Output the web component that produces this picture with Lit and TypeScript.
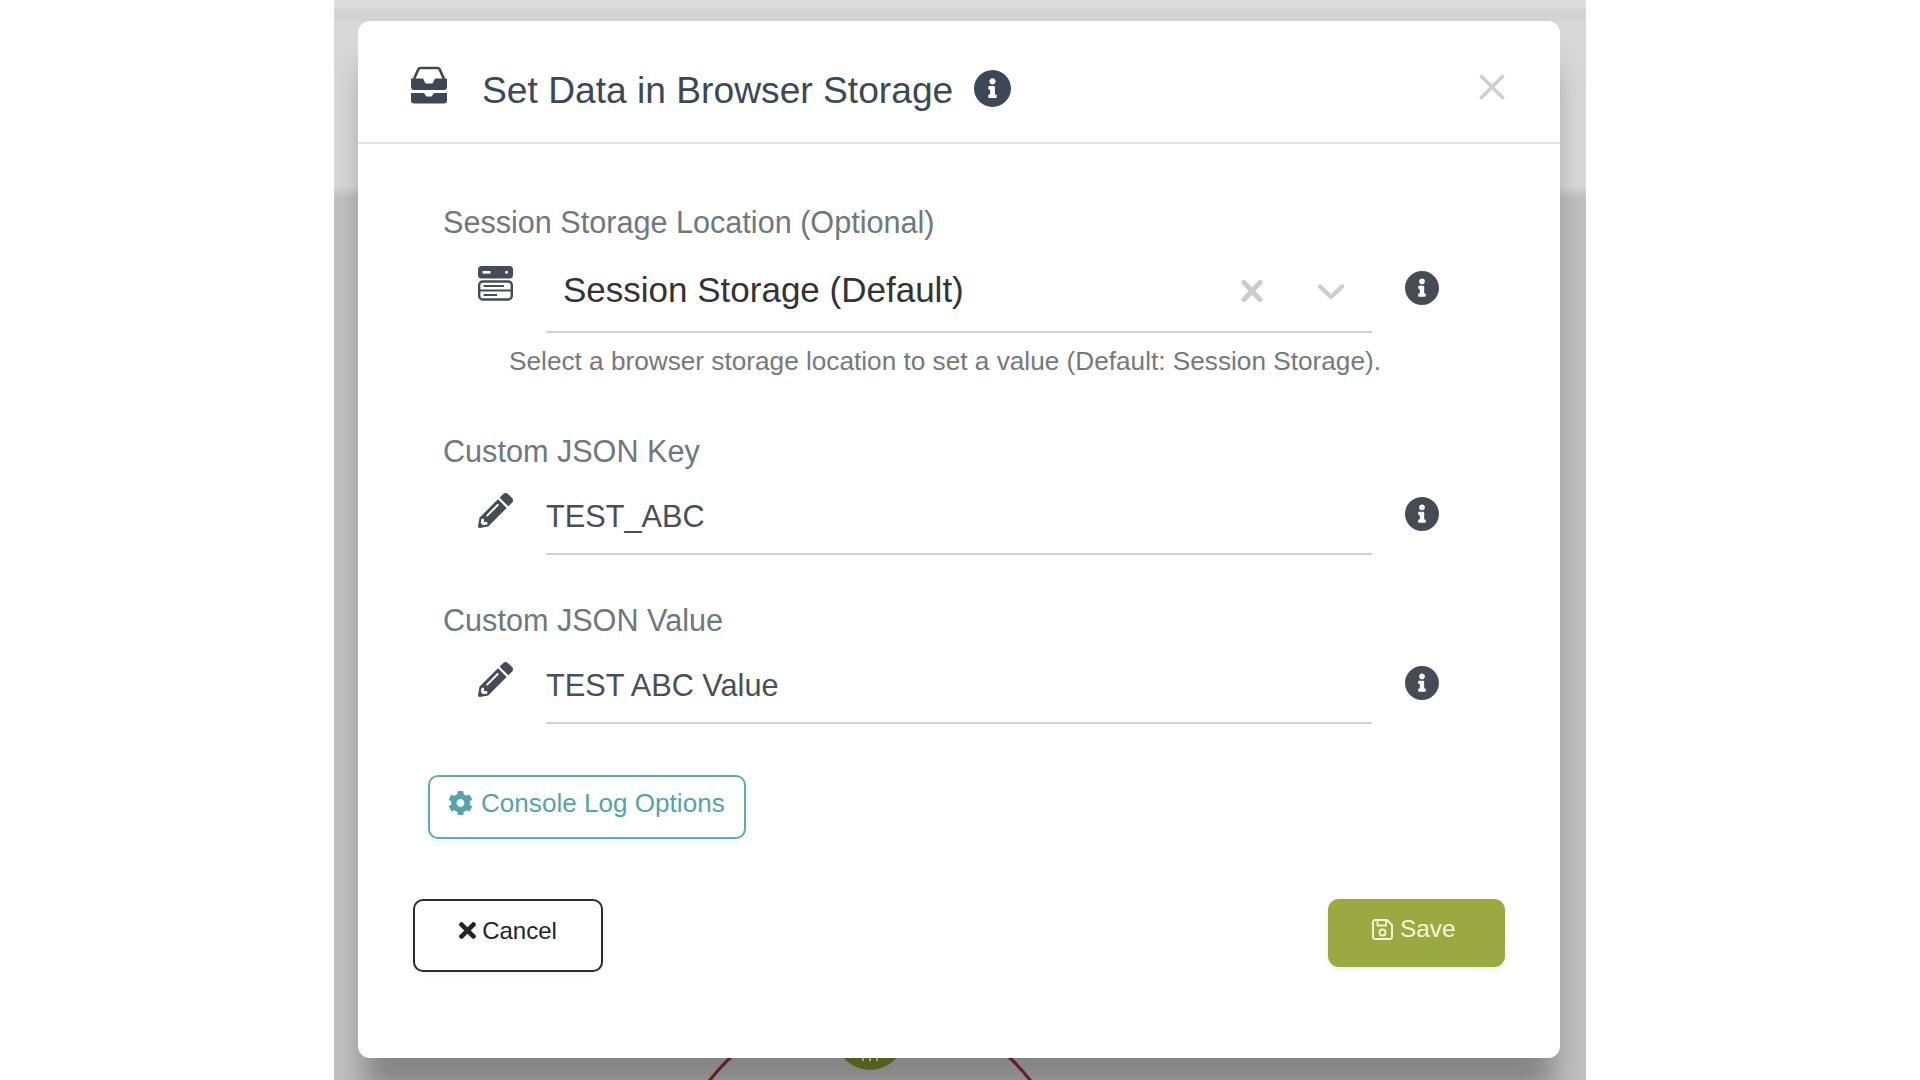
import { LitElement, html, css, svg } from "lit";
import { customElement } from "lit/decorators.js";

const INFO = "M256 8C119.043 8 8 119.083 8 256c0 136.997 111.043 248 248 248s248-111.003 248-248C504 119.083 392.957 8 256 8zm0 110c23.196 0 42 18.804 42 42s-18.804 42-42 42-42-18.804-42-42 18.804-42 42-42zm56 254c0 6.627-5.373 12-12 12h-88c-6.627 0-12-5.373-12-12v-24c0-6.627 5.373-12 12-12h12v-64h-12c-6.627 0-12-5.373-12-12v-24c0-6.627 5.373-12 12-12h64c6.627 0 12 5.373 12 12v100h12c6.627 0 12 5.373 12 12v24z";
const PENCIL = "M497.9 142.1l-46.1 46.1c-4.7 4.7-12.3 4.7-17 0l-111-111c-4.7-4.7-4.7-12.3 0-17l46.1-46.1c18.7-18.7 49.1-18.7 67.9 0l60.1 60.1c18.8 18.7 18.8 49.1 0 67.9zM284.2 99.8L21.6 362.4.4 483.9c-2.9 16.4 11.4 30.6 27.8 27.8l121.5-21.3 262.6-262.6c4.7-4.7 4.7-12.3 0-17l-111-111c-4.8-4.7-12.4-4.7-17.1 0zM124.1 339.9c-5.5-5.5-5.5-14.3 0-19.8l154-154c5.5-5.5 14.3-5.5 19.8 0s5.5 14.3 0 19.8l-154 154c-5.5 5.5-14.3 5.5-19.8 0zM88 424h48v36.3l-64.5 11.3-31.1-31.1L51.7 376H88v48z";
const COG = "M487.4 315.7l-42.6-24.6c4.3-23.2 4.3-47 0-70.2l42.6-24.6c4.9-2.8 7.1-8.6 5.5-14-11.1-35.6-30-67.8-54.7-94.6-3.8-4.1-10-5.1-14.8-2.3L380.8 110c-17.9-15.4-38.5-27.3-60.8-35.1V25.8c0-5.6-3.9-10.5-9.4-11.7-36.7-8.2-74.3-7.8-109.2 0-5.5 1.2-9.4 6.1-9.4 11.7V75c-22.2 7.9-42.8 19.8-60.8 35.1L88.7 85.5c-4.9-2.8-11-1.9-14.8 2.3-24.7 26.7-43.6 58.9-54.7 94.6-1.7 5.4.6 11.2 5.5 14L67.3 221c-4.3 23.2-4.3 47 0 70.2l-42.6 24.6c-4.9 2.8-7.1 8.6-5.5 14 11.1 35.6 30 67.8 54.7 94.6 3.8 4.1 10 5.1 14.8 2.3l42.6-24.6c17.9 15.4 38.5 27.3 60.8 35.1v49.2c0 5.6 3.9 10.5 9.4 11.7 36.7 8.2 74.3 7.8 109.2 0 5.5-1.2 9.4-6.1 9.4-11.7v-49.2c22.2-7.9 42.8-19.8 60.8-35.1l42.6 24.6c4.9 2.8 11 1.9 14.8-2.3 24.7-26.7 43.6-58.9 54.7-94.6 1.5-5.5-.7-11.3-5.6-14.1zM256 336c-44.1 0-80-35.9-80-80s35.9-80 80-80 80 35.9 80 80-35.9 80-80 80z";
const TIMES = "M242.72 256l100.07-100.07c12.28-12.28 12.28-32.19 0-44.48l-22.24-22.24c-12.28-12.28-32.19-12.28-44.48 0L176 189.28 75.93 89.21c-12.28-12.28-32.19-12.28-44.48 0L9.21 111.45c-12.28 12.28-12.28 32.19 0 44.48L109.28 256 9.21 356.07c-12.28 12.28-12.28 32.19 0 44.48l22.24 22.24c12.28 12.28 32.2 12.28 44.48 0L176 322.72l100.07 100.07c12.28 12.28 32.2 12.28 44.48 0l22.24-22.24c12.28-12.28 12.28-32.19 0-44.48L242.72 256z";

const infoIcon = (cls: string) => html`<svg class=${cls} viewBox="8 8 496 496"><path fill="currentColor" d=${INFO}></path></svg>`;
const pencilIcon = () => html`<svg class="field-icon pencil" viewBox="0 0 512 512"><path fill="currentColor" d=${PENCIL}></path></svg>`;

@customElement("app-root")
export class AppRoot extends LitElement {
  static styles = css`
    :host { display: block; width: 1920px; height: 1080px; overflow: hidden; background: #fff;
      font-family: "Liberation Sans", Arial, sans-serif; }
    * { box-sizing: border-box; }
    .stage { position: relative; width: 1252px; height: 1080px; margin: 0 auto; overflow: hidden; padding: 21px 26px 0 24px;
      background: linear-gradient(#dcdcdc 0, #dcdcdc 8px, #d6d6d6 8px, #d2d2d2 21px, #d8d8d8 21px, #d8d8d8 186px, #c0c0c0 198px, #c0c0c0 100%); }
    .behind { position: absolute; left: 0; top: 0; width: 1252px; height: 1080px; }
    .modal { position: relative; width: 1202px; height: 1037px; background: #fff; border-radius: 12px;
      box-shadow: 0 40px 30px -6px rgba(0,0,0,.31); }
    .head { display: flex; align-items: flex-start; height: 123px; border-bottom: 2px solid #e2e4e6; color: #3c4858; }
    .inbox { width: 38px; height: 38px; margin: 45px 0 0 52px; flex: none; }
    .title { margin: 0 0 0 34px; padding-top: 47px; font-size: 37.2px; line-height: 44px; font-weight: 400; white-space: nowrap; }
    .title-info { width: 37px; height: 37px; margin: 49px 0 0 21px; flex: none; color: #3c4858; }
    .close { width: 26px; height: 26px; margin: 53px 55px 0 auto; flex: none; color: #cfcfcf; }
    .body { padding: 60px 0 0 85px; }
    .label { height: 36px; font-size: 30.6px; line-height: 36px; color: #6f777f; white-space: nowrap; }
    .row { display: flex; align-items: flex-start; margin-left: 35px; width: 961px; }
    .row.sel { margin-top: 19px; height: 74px; }
    .row.txt { margin-top: 17px; height: 69px; }
    .field-icon { width: 35px; height: 35px; flex: none; color: #454c55; margin-top: 7px; }
    .input { flex: none; width: 826px; margin-left: 33px; height: 100%; border-bottom: 2px solid #cfd2d5; display: flex; align-items: flex-start; }
    .value { font-size: 30.7px; line-height: 36px; color: #484f57; margin-top: 13px; white-space: nowrap; }
    .sel .value { font-size: 35px; line-height: 40px; color: #333; margin: 11px 0 0 17px; }
    .clear { width: 22px; height: 24px; margin: 20px 0 0 auto; color: #cccccc; flex: none; }
    .chev { width: 28px; height: 18px; margin: 24px 27px 0 54px; color: #cccccc; flex: none; }
    .row-info { width: 34px; height: 34px; margin: 11px 0 0 auto; flex: none; color: #454c55; }
    .sel .row-info { margin-top: 12px; }
    .hint { margin: 10px 0 0 66px; width: 872px; height: 36px; line-height: 36px; font-size: 26.2px; color: #75797e; white-space: nowrap; text-align: center; }
    .label.second { margin-top: 54px; }
    .label.third { margin-top: 47px; }
    .console { display: flex; align-items: flex-start; margin: 51px 0 0 -15px; width: 318px; height: 64px; padding: 10px 0 0 18px;
      border: 2.5px solid #62a9b0; border-radius: 10px; color: #55a3ab; font-size: 26.1px; line-height: 32px; box-shadow: 0 2px 6px rgba(95,168,174,.18); }
    .console svg { width: 25px; height: 26px; margin: 3px 8px 0 0; flex: none; }
    .foot { display: flex; justify-content: space-between; align-items: flex-start; margin-top: 60px; padding: 0 55px; }
    .cancel { display: flex; justify-content: center; width: 190px; height: 73px; padding-top: 14px; border: 2.5px solid #2b2b2b; border-radius: 10px;
      font-size: 24px; line-height: 32px; color: #212529; box-shadow: 0 2px 6px rgba(0,0,0,.06); }
    .cancel svg { width: 17px; height: 25px; margin: 3px 6px 0 0; flex: none; }
    .save { display: flex; width: 177px; height: 68px; padding: 14px 0 0 44px; border-radius: 11px; background: #9aaa40; color: #f6f6d8;
      font-size: 24.4px; line-height: 32px; box-shadow: 0 2px 6px rgba(0,0,0,.08); }
    .save svg { width: 21px; height: 21px; margin: 6px 7px 0 0; flex: none; }
  `;

  render() {
    return html`
      <div class="stage">
        <svg class="behind" viewBox="0 0 1252 1080">
          ${svg`<circle cx="536" cy="1205" r="203" fill="none" stroke="#8e2a3a" stroke-width="3.2"></circle>
          <circle cx="536" cy="1035" r="35" fill="#7a8a28"></circle>
          <rect x="528" y="1058" width="2" height="3" fill="#e8e8d8"></rect>
          <rect x="535" y="1058" width="2" height="3" fill="#e8e8d8"></rect>
          <rect x="542" y="1058" width="2" height="3" fill="#e8e8d8"></rect>`}
        </svg>
        <div class="modal">
          <div class="head">
            <svg class="inbox" viewBox="0 0 38 38">
              <path d="M4 13 L8.5 3 a2 2 0 0 1 1.8-1 H27.7 a2 2 0 0 1 1.8 1 L34 13" fill="none" stroke="#3c4858" stroke-width="2.6" stroke-linejoin="round"></path>
              <path d="M1 12.5 H13 L15.5 17.5 H22.5 L25 12.5 H37 V21 a3 3 0 0 1-3 3 H4 a3 3 0 0 1-3-3 Z" fill="#3c4858"></path>
              <path d="M1 27 H14 L16.5 30.5 H21.5 L24 27 H37 V34.5 a3 3 0 0 1-3 3 H4 a3 3 0 0 1-3-3 Z" fill="#3c4858"></path>
            </svg>
            <h1 class="title">Set Data in Browser Storage</h1>
            ${infoIcon("title-info")}
            <svg class="close" viewBox="0 0 26 26"><path d="M2.5 2.5 L23.5 23.5 M23.5 2.5 L2.5 23.5" stroke="currentColor" stroke-width="3.8" stroke-linecap="round" fill="none"></path></svg>
          </div>
          <div class="body">
            <div class="label">Session Storage Location (Optional)</div>
            <div class="row sel">
              <svg class="field-icon" viewBox="0 0 35 35">
                <rect x="0" y="0" width="35" height="12.5" rx="3.5" fill="currentColor"></rect>
                <rect x="4.5" y="5" width="8" height="2.6" fill="#fff"></rect>
                <circle cx="28.5" cy="6.2" r="1.5" fill="#fff"></circle>
                <rect x="1.2" y="15.5" width="32.6" height="18" rx="3.5" fill="none" stroke="currentColor" stroke-width="2.4"></rect>
                <path d="M1.2 24.5 H33.8 M5.5 20 H26 M5.5 29 H19" fill="none" stroke="currentColor" stroke-width="2.2"></path>
              </svg>
              <div class="input">
                <span class="value">Session Storage (Default)</span>
                <svg class="clear" viewBox="0 0 22 24"><path d="M3 3.5 L19 20.5 M19 3.5 L3 20.5" stroke="currentColor" stroke-width="5" stroke-linecap="round" fill="none"></path></svg>
                <svg class="chev" viewBox="0 0 28 18"><path d="M3 3.5 L14 14 L25 3.5" stroke="currentColor" stroke-width="4.4" stroke-linecap="round" stroke-linejoin="round" fill="none"></path></svg>
              </div>
              ${infoIcon("row-info")}
            </div>
            <div class="hint">Select a browser storage location to set a value (Default: Session Storage).</div>
            <div class="label second">Custom JSON Key</div>
            <div class="row txt">
              ${pencilIcon()}
              <div class="input"><span class="value">TEST_ABC</span></div>
              ${infoIcon("row-info")}
            </div>
            <div class="label third">Custom JSON Value</div>
            <div class="row txt">
              ${pencilIcon()}
              <div class="input"><span class="value">TEST ABC Value</span></div>
              ${infoIcon("row-info")}
            </div>
            <div class="console">
              <svg viewBox="0 0 512 512"><path fill="currentColor" d=${COG}></path></svg>
              <span>Console Log Options</span>
            </div>
          </div>
          <div class="foot">
            <div class="cancel">
              <svg viewBox="0 0 352 512"><path fill="currentColor" d=${TIMES}></path></svg>
              <span>Cancel</span>
            </div>
            <div class="save">
              <svg viewBox="0 0 21 21">
                <path d="M1 3 a2 2 0 0 1 2-2 H15 L20 6 V18 a2 2 0 0 1-2 2 H3 a2 2 0 0 1-2-2 Z" fill="none" stroke="currentColor" stroke-width="1.9" stroke-linejoin="round"></path>
                <path d="M5.5 1 V6.5 H14 V1" fill="none" stroke="currentColor" stroke-width="1.8"></path>
                <circle cx="10.5" cy="13.5" r="3" fill="none" stroke="currentColor" stroke-width="1.8"></circle>
              </svg>
              <span>Save</span>
            </div>
          </div>
        </div>
      </div>
    `;
  }
}
